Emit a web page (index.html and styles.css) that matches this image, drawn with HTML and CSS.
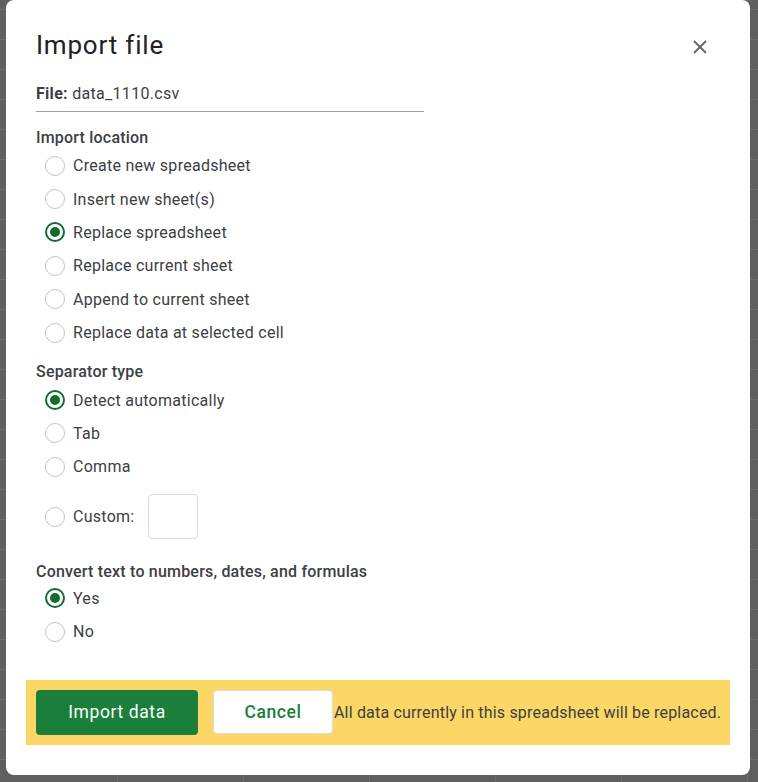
FILE: index.html
```html
<!DOCTYPE html>
<html>
<head>
<meta charset="utf-8">
<link rel="stylesheet" href="styles.css">
</head>
<body>
<div class="dialog">
  <div class="head">
    <h1 class="title">Import file</h1>
    <button class="close" aria-label="Close">
      <svg width="14" height="14" viewBox="0 0 14 14"><path d="M1 1L13 13M13 1L1 13" stroke="#5f6368" stroke-width="1.8" fill="none"/></svg>
    </button>
  </div>
  <div class="file"><b>File:</b> data_1110.csv</div>

  <div class="section-title first">Import location</div>
  <div class="radios">
    <label class="row"><span class="radio"></span>Create new spreadsheet</label>
    <label class="row"><span class="radio"></span>Insert new sheet(s)</label>
    <label class="row"><span class="radio on"></span>Replace spreadsheet</label>
    <label class="row"><span class="radio"></span>Replace current sheet</label>
    <label class="row"><span class="radio"></span>Append to current sheet</label>
    <label class="row"><span class="radio"></span>Replace data at selected cell</label>
  </div>

  <div class="section-title sep">Separator type</div>
  <div class="radios">
    <label class="row"><span class="radio on"></span>Detect automatically</label>
    <label class="row"><span class="radio"></span>Tab</label>
    <label class="row"><span class="radio"></span>Comma</label>
    <label class="row custom"><span class="radio"></span>Custom:<span class="custom-box"></span></label>
  </div>

  <div class="section-title conv">Convert text to numbers, dates, and formulas</div>
  <div class="radios">
    <label class="row"><span class="radio on"></span>Yes</label>
    <label class="row"><span class="radio"></span>No</label>
  </div>

  <div class="footer">
    <button class="btn primary">Import data</button>
    <button class="btn secondary">Cancel</button>
    <span class="msg">All data currently in this spreadsheet will be replaced.</span>
  </div>
</div>
</body>
</html>
```
FILE: styles.css
```css
html, body {
  margin: 0;
  height: 782px;
  overflow: hidden;
}
body {
  background-color: #5e5f5e;
  background-image:
    repeating-linear-gradient(to bottom, transparent 0, transparent 9px, #6c6c6c 9px, #6c6c6c 10px, transparent 10px, transparent 30px),
    repeating-linear-gradient(to right, transparent 0, transparent 117px, #6c6c6c 117px, #6c6c6c 118px, transparent 118px, transparent 126px);
  font-family: Roboto, "Liberation Sans", sans-serif;
  color: #3c4043;
}
.dialog {
  margin-left: 6px;
  width: 744px;
  height: 775px;
  background: #fff;
  border-radius: 8px;
  box-sizing: border-box;
  padding: 28px 20px 0 30px;
}
.head {
  display: flex;
  justify-content: space-between;
  align-items: flex-start;
  height: 34px;
}
.title {
  margin: 0;
  font-weight: 400;
  font-size: 26px;
  line-height: 34px;
  letter-spacing: 0.8px;
  color: #202124;
}
.close {
  background: none;
  border: 0;
  padding: 0;
  width: 14px;
  height: 14px;
  margin: 12px 23px 0 0;
  display: block;
}
.close svg { display: block; }
.file {
  margin-top: 22px;
  width: 388px;
  font-size: 16px;
  line-height: 20px;
  letter-spacing: 0.3px;
  padding-bottom: 7px;
  border-bottom: 1px solid #9e9e9e;
}
.file b { font-weight: 700; }
.section-title {
  font-size: 16px;
  line-height: 20px;
  font-weight: 500;
  letter-spacing: 0.2px;
  margin-bottom: 1px;
}
.section-title.first { margin-top: 16px; }
.section-title.sep { margin-top: 13px; }
.section-title.conv { margin-top: 22.5px; margin-bottom: 0; }
.radios {
  display: flex;
  flex-direction: column;
}
.row {
  display: flex;
  align-items: center;
  height: 33.4px;
  padding-left: 9px;
  font-size: 16px;
  letter-spacing: 0.27px;
}
.radio {
  width: 20px;
  height: 20px;
  box-sizing: border-box;
  border: 1px solid #c4c4c4;
  border-radius: 50%;
  margin-right: 8px;
  flex: none;
  position: relative;
}
.radio.on {
  border: 2.5px solid #146c2e;
}
.radio.on::after {
  content: "";
  position: absolute;
  left: 2.5px;
  top: 2.5px;
  width: 10px;
  height: 10px;
  border-radius: 50%;
  background: #146c2e;
}
.row.custom {
  height: 45px;
  margin-top: 10.5px;
}
.custom-box {
  width: 50px;
  height: 45px;
  box-sizing: border-box;
  border: 1px solid #dadce0;
  border-radius: 4px;
  margin-left: 13px;
}
.footer {
  margin-top: 31.5px;
  margin-left: -10px;
  width: 704px;
  height: 65px;
  box-sizing: border-box;
  background: #fdd766;
  padding: 10px 0 0 10px;
  display: flex;
  align-items: flex-start;
}
.btn {
  font-family: Roboto, "Liberation Sans", sans-serif;
  font-size: 17.5px;
  font-weight: 400;
  letter-spacing: 0.6px;
  border-radius: 4px;
  height: 45px;
  cursor: pointer;
}
.primary {
  width: 162px;
  background: #1b7f3b;
  color: #fff;
  border: 0;
}
.secondary {
  width: 120px;
  height: 44px;
  margin-left: 15px;
  background: #fff;
  color: #1b7f3b;
  border: 1px solid #dadce0;
  font-weight: 500;
}
.msg {
  margin-left: 1px;
  font-size: 16px;
  line-height: 45px;
  letter-spacing: 0.18px;
  color: #3c4043;
}
```
